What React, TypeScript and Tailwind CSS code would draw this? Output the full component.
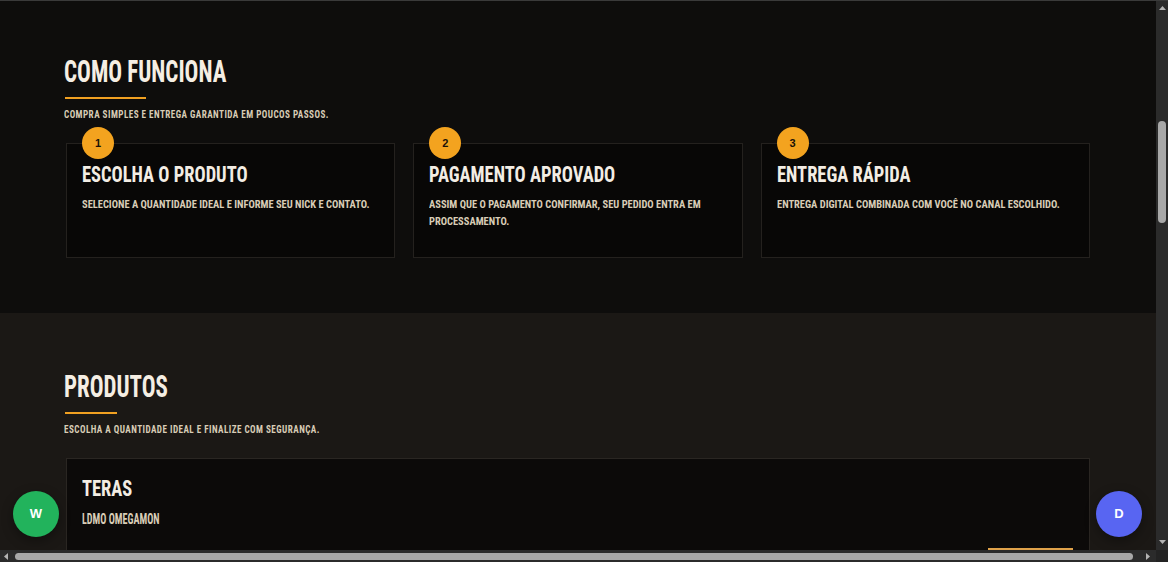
import React from "react";

const COND = "font-['Roboto_Condensed','DejaVu_Sans_Condensed',sans-serif]";

function HeaderBlock({ title, sub, lineW }: { title: string; sub: string; lineW: string }) {
  return (
    <div>
      <h2 className={`-ml-[2px] text-[31px] leading-none font-bold text-[#f5eee3] ${COND}`}>
        <span className="inline-block origin-left scale-x-[0.739] whitespace-nowrap">{title}</span>
      </h2>
      <div className={`mt-[10px] -ml-px h-[2px] bg-[#f0a021] ${lineW}`} />
      <p className={`mt-[9px] -ml-[2px] text-[10px] leading-[14px] font-bold tracking-[0.5px] text-[#d8ccb6] ${COND}`}>
        <span className="inline-block origin-left scale-x-[0.912] whitespace-nowrap">{sub}</span>
      </p>
    </div>
  );
}

const steps = [
  { n: "1", title: "ESCOLHA O PRODUTO", desc: ["SELECIONE A QUANTIDADE IDEAL E INFORME SEU NICK E CONTATO."] },
  { n: "2", title: "PAGAMENTO APROVADO", desc: ["ASSIM QUE O PAGAMENTO CONFIRMAR, SEU PEDIDO ENTRA EM", "PROCESSAMENTO."] },
  { n: "3", title: "ENTREGA RÁPIDA", desc: ["ENTREGA DIGITAL COMBINADA COM VOCÊ NO CANAL ESCOLHIDO."] },
];

function Tri({ dir }: { dir: "up" | "down" | "left" | "right" }) {
  const pts =
    dir === "up" ? "0,4 3.5,0 7,4" : dir === "down" ? "0,0 7,0 3.5,4" : dir === "left" ? "4,0 4,7 0,3.5" : "0,0 0,7 4,3.5";
  const w = dir === "up" || dir === "down" ? 7 : 4;
  const h = dir === "up" || dir === "down" ? 4 : 7;
  return (
    <svg width={w} height={h} viewBox={`0 0 ${w} ${h}`} className="block">
      <polygon points={pts} fill="#b4b4b4" />
    </svg>
  );
}

export default function App() {
  return (
    <div className="relative flex h-[562px] w-[1168px] flex-col overflow-hidden border-t border-[#3a3a3a] bg-[#0e0d0c]">
      <div className="flex min-h-0 flex-1">
        <main className="min-w-0 flex-1 overflow-hidden">
          <section className="bg-[#0e0d0c] pt-[55px] pb-[55px]">
            <div className="mx-auto w-[1024px]">
              <HeaderBlock title="COMO FUNCIONA" sub="COMPRA SIMPLES E ENTREGA GARANTIDA EM POUCOS PASSOS." lineW="w-[81px]" />
              <div className="mt-[21px] grid grid-cols-3 gap-[18px]">
                {steps.map((s) => (
                  <div key={s.n} className="relative border border-[#24211e] bg-[#080706] pt-5 pr-4 pb-[27px] pl-[15px]">
                    <div className="absolute -top-[17px] left-[15px] flex h-8 w-8 items-center justify-center rounded-full bg-[#f3a31f] font-['Liberation_Sans',sans-serif] text-[11px] font-bold text-[#1a1207]">
                      {s.n}
                    </div>
                    <h3 className={`text-[22px] leading-none font-bold text-[#f3ede4] ${COND}`}>
                      <span className="inline-block origin-left scale-x-[0.84] whitespace-nowrap">{s.title}</span>
                    </h3>
                    <p className={`mt-[10px] text-[11px] leading-[17px] font-bold text-[#d9cdb7] ${COND}`}>
                      {s.desc.map((d) => (
                        <span key={d} className="block origin-left scale-x-[0.95] whitespace-nowrap">{d}</span>
                      ))}
                    </p>
                  </div>
                ))}
              </div>
            </div>
          </section>
          <section className="h-[400px] bg-[#1b1815] pt-[58px]">
            <div className="mx-auto w-[1024px]">
              <HeaderBlock title="PRODUTOS" sub="ESCOLHA A QUANTIDADE IDEAL E FINALIZE COM SEGURANÇA." lineW="w-[52px]" />
              <div className="mt-[21px] border border-[#2a2622] bg-[#0c0a09] pt-[19px] pr-4 pl-[15px]">
                <h3 className={`text-[22px] leading-none font-bold text-[#f3ede4] ${COND}`}>
                  <span className="inline-block origin-left scale-x-[0.84] whitespace-nowrap">TERAS</span>
                </h3>
                <p className={`mt-[10px] text-[14px] leading-[18px] font-bold text-[#d9cdb7] ${COND}`}>
                  <span className="inline-block origin-left scale-x-[0.724] whitespace-nowrap">LDMO OMEGAMON</span>
                </p>
                <div className="mt-[20px] flex justify-end">
                  <button className="h-[44px] w-[85px] bg-[#e0a24a]" />
                </div>
              </div>
            </div>
          </section>
        </main>
        <div className="flex w-[12px] flex-col items-center bg-[#2b2b2b]">
          <div className="mt-[5px]">
            <Tri dir="up" />
          </div>
          <div className="mt-[111px] h-[102px] w-[8px] rounded-full bg-[#a8a8a8]" />
          <div className="flex-1" />
          <div className="mb-[6px]">
            <Tri dir="down" />
          </div>
        </div>
      </div>
      <div className="flex h-[12px] items-center bg-[#2b2b2b]">
        <div className="ml-[4px]">
          <Tri dir="left" />
        </div>
        <div className="ml-[7px] h-[7px] w-[1118px] rounded-full bg-[#a8a8a8]" />
        <div className="ml-[13px]">
          <Tri dir="right" />
        </div>
        <div className="ml-auto h-[12px] w-[12px] bg-[#232323]" />
      </div>

      <div className="absolute top-[490px] left-[13px] flex h-[46px] w-[46px] items-center justify-center rounded-full bg-[#22b35c] font-['Liberation_Sans',sans-serif] text-[13px] font-bold text-white shadow-[0_4px_12px_rgba(0,0,0,0.35)]">
        W
      </div>
      <div className="absolute top-[490px] left-[1096px] flex h-[46px] w-[46px] items-center justify-center rounded-full bg-[#5865f2] font-['Liberation_Sans',sans-serif] text-[13px] font-bold text-white shadow-[0_4px_12px_rgba(0,0,0,0.35)]">
        D
      </div>
    </div>
  );
}
